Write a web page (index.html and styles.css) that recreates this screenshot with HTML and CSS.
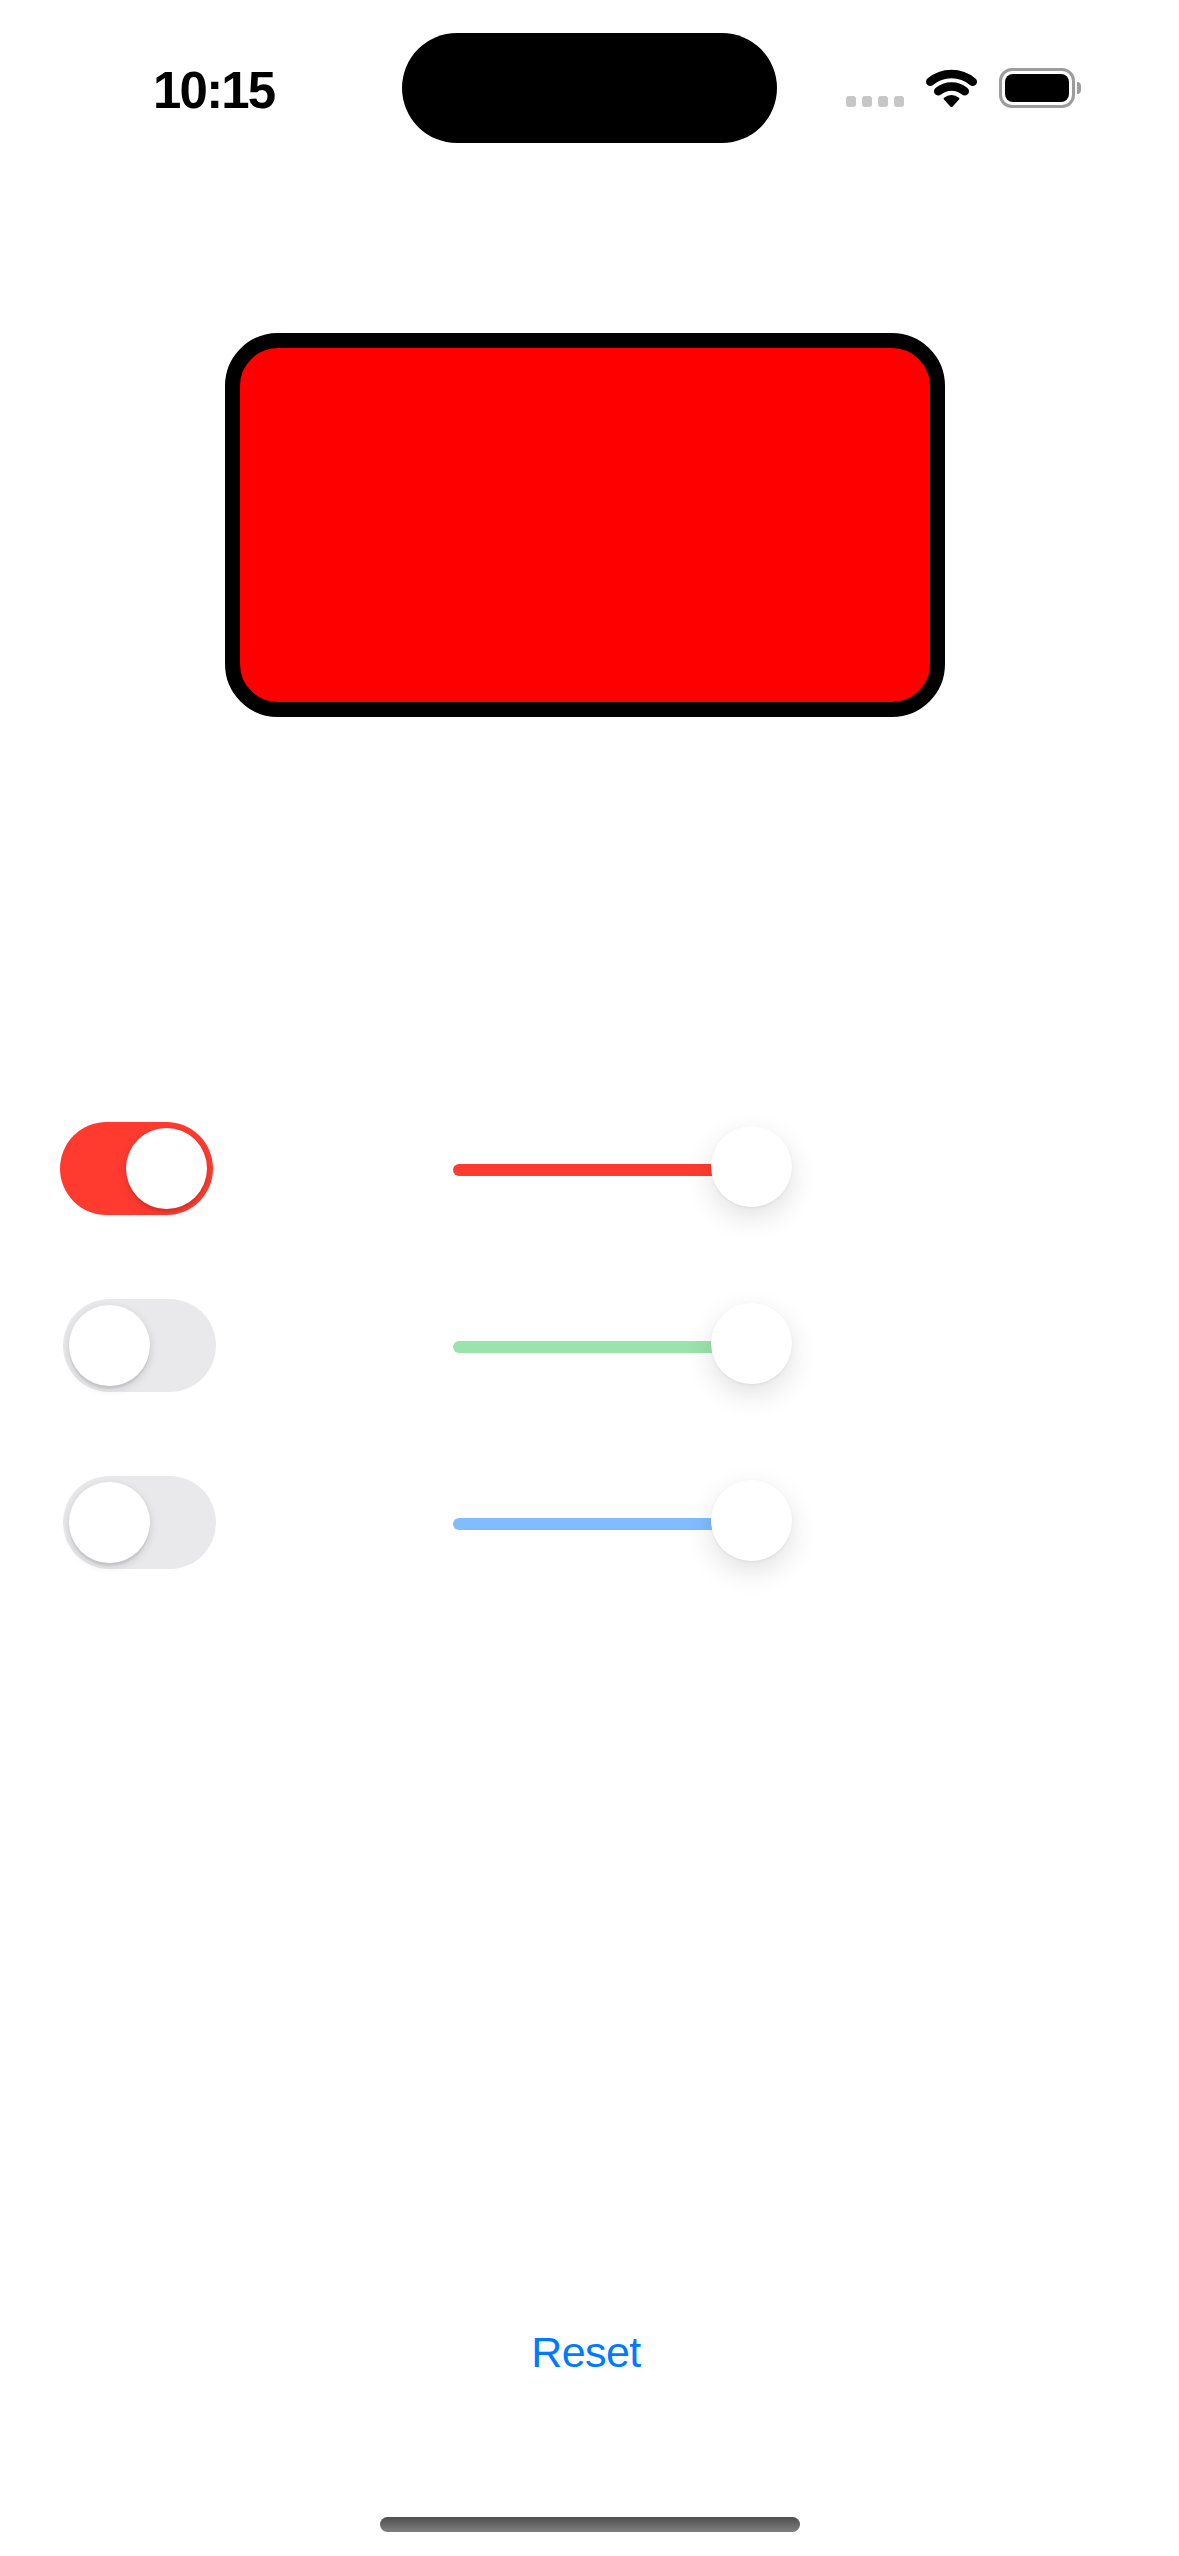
FILE: index.html
```html
<!DOCTYPE html>
<html lang="en">
<head>
<meta charset="utf-8">
<title>Color Mixer</title>
<link rel="stylesheet" href="styles.css">
</head>
<body>
<div class="page">
  <header class="status">
    <div class="time">10:15</div>
    <div class="island"></div>
    <div class="signal">
      <span class="dot"></span><span class="dot"></span><span class="dot"></span><span class="dot"></span>
    </div>
    <svg class="wifi" width="51" height="38" viewBox="0 0 51 38">
      <path d="M4.3 12.7 A33 33 0 0 1 46.7 12.7" fill="none" stroke="#000" stroke-width="8.6" stroke-linecap="round"/>
      <path d="M12.3 22.3 A20.5 20.5 0 0 1 38.7 22.3" fill="none" stroke="#000" stroke-width="8.6" stroke-linecap="round"/>
      <path d="M25.5 37 L18.9 29.6 A10.5 10.5 0 0 1 32.1 29.6 Z" fill="#000" stroke="#000" stroke-width="2.5" stroke-linejoin="round"/>
    </svg>
    <div class="battery">
      <div class="battery-body"><div class="battery-fill"></div></div>
      <div class="battery-tip"></div>
    </div>
  </header>

  <div class="swatch"></div>

  <section class="controls">
    <div class="row">
      <div class="toggle toggle-on"><span class="knob"></span></div>
      <div class="slider">
        <div class="track track-red"></div>
        <span class="thumb"></span>
      </div>
    </div>
    <div class="row">
      <div class="toggle toggle-off"><span class="knob"></span></div>
      <div class="slider">
        <div class="track track-green"></div>
        <span class="thumb"></span>
      </div>
    </div>
    <div class="row">
      <div class="toggle toggle-off"><span class="knob"></span></div>
      <div class="slider">
        <div class="track track-blue"></div>
        <span class="thumb"></span>
      </div>
    </div>
  </section>

  <div class="reset">Reset</div>

  <div class="home-indicator"></div>
</div>
</body>
</html>
```
FILE: styles.css
```css
html, body {
  margin: 0;
  padding: 0;
  background: #ffffff;
}

body {
  width: 1179px;
  height: 2556px;
  overflow: hidden;
  font-family: "Liberation Sans", Arial, sans-serif;
}

.page {
  display: flex;
  flex-direction: column;
  height: 2556px;
}

/* Status bar */
.status {
  display: flex;
  align-items: center;
  height: 110px;
  margin-top: 33px;
}

.time {
  margin-left: 153px;
  width: 123px;
  margin-top: 4px;
  font-size: 51px;
  line-height: 51px;
  font-weight: 700;
  letter-spacing: -1.8px;
  color: #000;
}

.island {
  margin-left: 126px;
  width: 375px;
  height: 110px;
  border-radius: 55px;
  background: #000;
}

.signal {
  display: flex;
  gap: 6px;
  margin-left: 69px;
  margin-top: 26px;
}

.dot {
  width: 10px;
  height: 11px;
  border-radius: 3px;
  background: #c6c6c6;
}

.wifi {
  margin-left: 22px;
  display: block;
}

.battery {
  display: flex;
  align-items: center;
  margin-left: 22px;
}

.battery-body {
  width: 76px;
  height: 40px;
  box-sizing: border-box;
  border: 3px solid #9c9c9c;
  border-radius: 13px;
  padding: 3px;
}

.battery-fill {
  width: 100%;
  height: 100%;
  background: #000;
  border-radius: 8px;
}

.battery-tip {
  width: 4px;
  height: 12px;
  margin-left: 2px;
  background: #9c9c9c;
  border-radius: 0 4px 4px 0;
}

/* Colour swatch */
.swatch {
  margin: 190px 0 0 225px;
  width: 720px;
  height: 384px;
  box-sizing: border-box;
  border: 15px solid #000;
  border-radius: 53px;
  background: #ff0000;
}

/* Controls */
.controls {
  display: flex;
  flex-direction: column;
  gap: 84px;
  margin-top: 405px;
}

.row {
  display: grid;
  grid-template-columns: 453px auto;
  align-items: start;
  height: 93px;
}

.toggle {
  display: flex;
  width: 153px;
  height: 93px;
  box-sizing: border-box;
  padding: 6px;
  border-radius: 46.5px;
}

.toggle-on {
  margin-left: 60px;
  background: #ff3b30;
  justify-content: flex-end;
}

.toggle-off {
  margin-left: 63px;
  background: #e9e9eb;
  justify-content: flex-start;
}

.knob {
  width: 81px;
  height: 81px;
  border-radius: 50%;
  background: #ffffff;
  box-shadow: 0 3px 8px rgba(0, 0, 0, 0.15), 0 3px 1px rgba(0, 0, 0, 0.06);
}

.slider {
  position: relative;
  width: 339px;
  height: 93px;
}

.track {
  margin-top: 42px;
  width: 300px;
  height: 12px;
  border-radius: 6px;
}

.track-red { background: #ff3b30; }
.track-green { background: #9ae3ac; }
.track-blue { background: #80bcff; }

.thumb {
  position: absolute;
  top: 4px;
  left: 258px;
  width: 81px;
  height: 81px;
  border-radius: 50%;
  background: #ffffff;
  box-shadow: 0 10px 28px rgba(0, 0, 0, 0.12), 0 1px 3px rgba(0, 0, 0, 0.06);
}

/* Reset button */
.reset {
  margin-top: 757px;
  width: 1172px;
  text-align: center;
  font-size: 43px;
  line-height: 52px;
  letter-spacing: -0.6px;
  color: #007aff;
}

/* Home indicator */
.home-indicator {
  margin: 139px 0 0 380px;
  width: 420px;
  height: 15px;
  border-radius: 8px;
  background: linear-gradient(#4e4e4e, #808080);
}
```
